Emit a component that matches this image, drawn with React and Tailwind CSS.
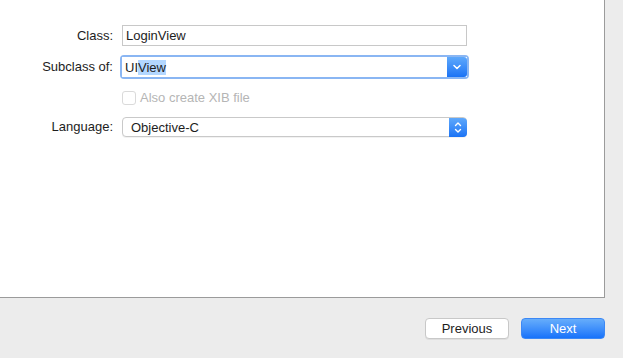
export default function App() {
  return (
    <div
      className="w-[623px] h-[358px] bg-[#ececec] flex flex-col text-[13px] text-[#1d1d1d] overflow-hidden"
      style={{ fontFamily: '"Liberation Sans", Arial, sans-serif' }}
    >
      <div className="w-[605px] h-[298px] bg-white border-r border-b border-[#9b9b9b] pt-[25px]">
        <div className="grid grid-cols-[113px_345px] gap-x-[9px] items-center">
          {/* Class */}
          <div className="text-right leading-[21px]">Class:</div>
          <div className="h-[21px] border border-[#c8c8c8] bg-white flex items-center pl-[3px] leading-none">
            LoginView
          </div>

          {/* Subclass */}
          <div className="text-right mt-[11px] leading-[20px]">Subclass of:</div>
          <div className="mt-[11px] relative h-[20px]">
            <div className="absolute -inset-[2px] rounded-[4px] border-[3px] border-[#8ab6f3]" />
            <div className="relative h-[20px] bg-white flex items-center justify-between">
              <div className="pl-[3px] flex items-center leading-[15px]">
                <span>UI</span>
                <span className="bg-[#b3d7ff]">View</span>
              </div>
              <div className="w-[20px] h-[20px] rounded-r-[3px] bg-gradient-to-b from-[#5ea8fb] to-[#1a73f5] flex items-center justify-center">
                <svg width="8" height="6" viewBox="0 0 8 6" fill="none">
                  <path d="M1 1.5 L4 4.5 L7 1.5" stroke="white" strokeWidth="1.5" strokeLinecap="round" strokeLinejoin="round" />
                </svg>
              </div>
            </div>
          </div>

          {/* Checkbox */}
          <div />
          <div className="mt-[14px] flex items-center gap-[4px] text-[#b5b5b5] leading-[14px]">
            <div className="w-[14px] h-[14px] rounded-[3px] border border-[#dadada] bg-white" />
            <span>Also create XIB file</span>
          </div>

          {/* Language */}
          <div className="text-right mt-[12px] leading-[20px]">Language:</div>
          <div className="mt-[12px] h-[20px] rounded-[4px] border border-[#c9c9c9] bg-white flex items-center justify-between shadow-[0_1px_0_rgba(0,0,0,0.05)]">
            <span className="pl-[8px] leading-none">Objective-C</span>
            <div className="w-[18px] h-[19px] -mr-px rounded-r-[4px] bg-gradient-to-b from-[#5ea8fb] to-[#1a73f5] flex items-center justify-center">
              <svg width="8" height="13" viewBox="0 0 8 13" fill="none">
                <path d="M1.5 4.5 L4 2 L6.5 4.5" stroke="white" strokeWidth="1.4" strokeLinecap="round" strokeLinejoin="round" />
                <path d="M1.5 8.5 L4 11 L6.5 8.5" stroke="white" strokeWidth="1.4" strokeLinecap="round" strokeLinejoin="round" />
              </svg>
            </div>
          </div>
        </div>
      </div>

      <div className="flex justify-end gap-[12px] pr-[18px] pt-[20px]">
        <button className="w-[84px] h-[21px] rounded-[4px] bg-white border border-[#c8c8c8] shadow-[0_1px_0_rgba(0,0,0,0.06)] text-[#1d1d1d] leading-none">
          Previous
        </button>
        <button className="w-[84px] h-[21px] rounded-[4px] bg-gradient-to-b from-[#66adfb] to-[#1672fa] border border-[#3c88f5] text-white leading-none">
          Next
        </button>
      </div>
    </div>
  );
}
